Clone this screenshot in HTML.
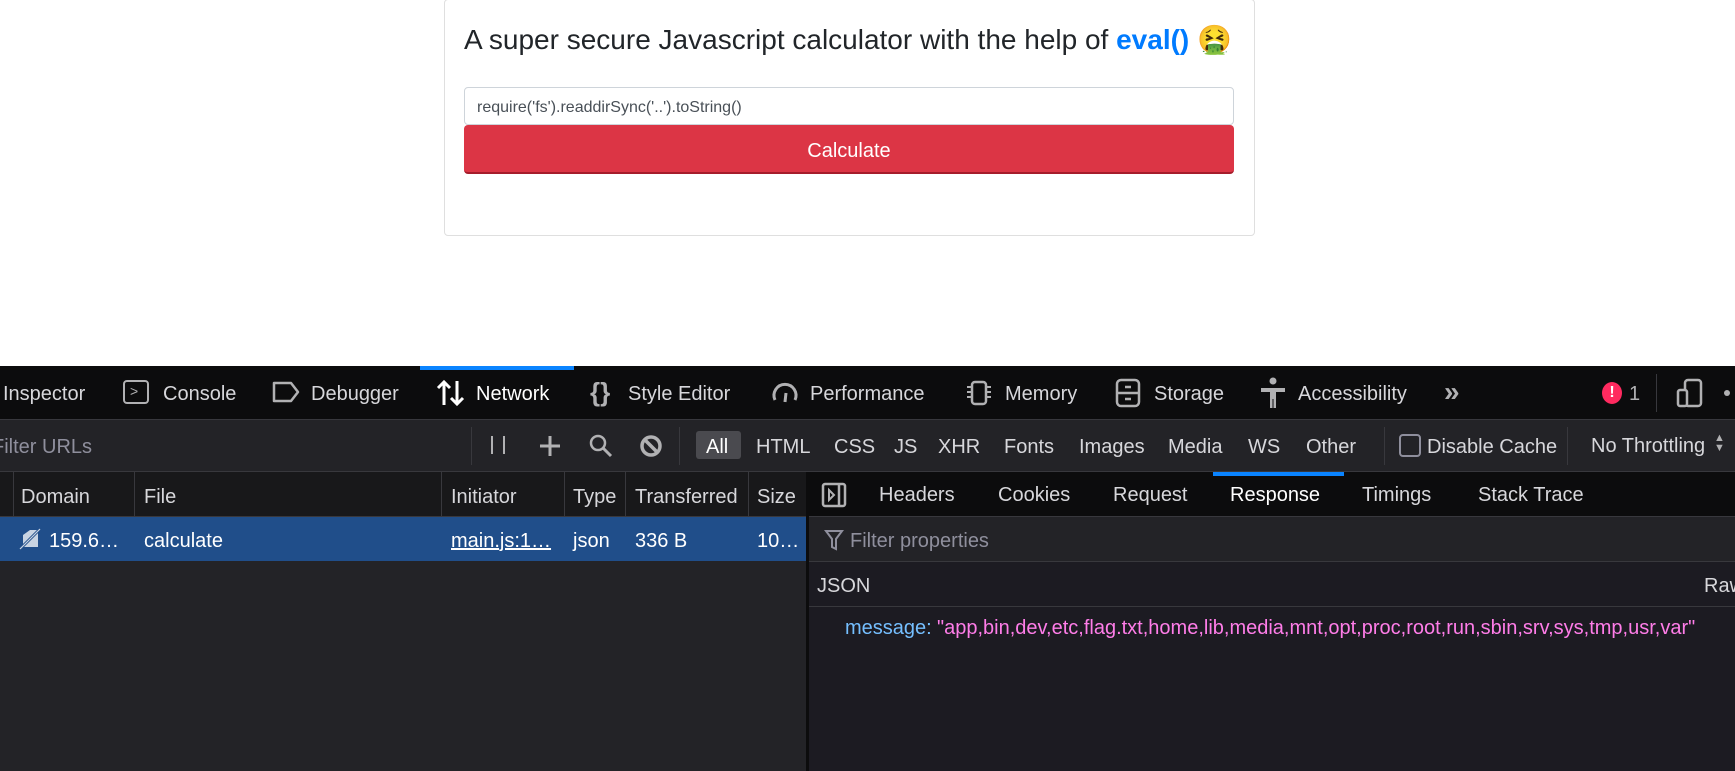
<!DOCTYPE html>
<html><head><meta charset="utf-8"><style>
*{margin:0;padding:0;box-sizing:border-box}
body{width:1735px;height:771px;overflow:hidden;background:#fff;position:relative;font-family:"Liberation Sans",sans-serif}
.a{position:absolute;white-space:nowrap}
.card{left:444px;top:-1px;width:811px;height:237px;border:1px solid #dfdfdf;border-radius:4px}
.dt{font-size:20px;color:#d7d7db}
.dt .a{line-height:1}
.ic{position:absolute}
</style></head><body>
<div class="a card"></div>
<div class="a" style="left:464px;top:18px;font-size:28px;color:#212529">A super secure Javascript calculator with the help of <b style="color:#007bff">eval()</b> <span style="font-family:'Noto Sans CJK SC',sans-serif">🤮</span></div>
<div class="a" style="left:464px;top:87px;width:770px;height:38px;border:1px solid #ced4da;border-radius:4px;font-size:16px;color:#495057;padding:11px 12px 0">require('fs').readdirSync('..').toString()</div>
<div class="a" style="left:464px;top:125px;width:770px;height:49px;background:#dc3545;border-radius:4px;border-bottom:2px solid #a51d2b;color:#fff;font-size:20px;text-align:center;line-height:53px">Calculate</div>

<div class="dt">
<div class="a" style="left:0;top:366px;width:1735px;height:54px;background:#0c0c0d;border-bottom:1px solid #38383d"></div>
<div class="a" style="left:420px;top:366px;width:154px;height:4px;background:#0a84ff"></div>
<div class="a" style="left:3px;top:384px">Inspector</div>
<div class="ic" style="left:123px;top:380px;width:26px;height:24px;border:2.5px solid #b1b1b3;border-radius:4px;color:#b1b1b3;font-size:14px;line-height:18px;padding-left:5px">&gt;</div>
<div class="a" style="left:163px;top:384px">Console</div>
<svg class="ic" style="left:271px;top:380px" width="30" height="24"><path d="M3 3h17l7 9-7 9H3z" fill="none" stroke="#b1b1b3" stroke-width="2.5" stroke-linejoin="round"/></svg>
<div class="a" style="left:311px;top:384px">Debugger</div>
<svg class="ic" style="left:436px;top:379px" width="30" height="28"><path d="M8 26V3M2 9l6-6 6 6M21 2v23M15 19l6 6 6-6" fill="none" stroke="#fff" stroke-width="3"/></svg>
<div class="a" style="left:476px;top:384px;color:#fff">Network</div>
<div class="a" style="left:590px;top:379px;font-size:26px;font-weight:bold;color:#b1b1b3">{}</div>
<div class="a" style="left:628px;top:384px">Style Editor</div>
<svg class="ic" style="left:770px;top:378px" width="30" height="28"><path d="M5 22A11 11 0 1 1 25 22" fill="none" stroke="#b1b1b3" stroke-width="3"/><path d="M15 24l1-9" stroke="#b1b1b3" stroke-width="3"/></svg>
<div class="a" style="left:810px;top:384px">Performance</div>
<svg class="ic" style="left:965px;top:379px" width="28" height="28"><rect x="7" y="3" width="14" height="22" rx="3" fill="none" stroke="#b1b1b3" stroke-width="2.5"/><path d="M2 8h4M2 13h4M2 18h4M22 8h4M22 13h4M22 18h4" stroke="#b1b1b3" stroke-width="2"/></svg>
<div class="a" style="left:1005px;top:384px">Memory</div>
<svg class="ic" style="left:1115px;top:378px" width="26" height="30"><rect x="2" y="2" width="22" height="26" rx="4" fill="none" stroke="#b1b1b3" stroke-width="2.5"/><path d="M2 15h22M10 9h6M10 21h6" stroke="#b1b1b3" stroke-width="2.5"/></svg>
<div class="a" style="left:1154px;top:384px">Storage</div>
<svg class="ic" style="left:1259px;top:377px" width="28" height="32"><circle cx="14" cy="4" r="3.5" fill="#b1b1b3"/><path d="M2 11h24v4H17v16h-2.5v-9h-1v9H11V15H2z" fill="#b1b1b3"/></svg>
<div class="a" style="left:1298px;top:384px">Accessibility</div>
<div class="a" style="left:1444px;top:378px;font-size:28px;font-weight:bold;color:#b1b1b3">»</div>
<div class="ic" style="left:1602px;top:382px;width:20px;height:22px;border-radius:50%;background:#ff2a5f;color:#fff;font-size:16px;font-weight:bold;text-align:center;line-height:22px">!</div>
<div class="a" style="left:1629px;top:384px;color:#b1b1b3">1</div>
<div class="a" style="left:1656px;top:374px;width:1px;height:38px;background:#38383d"></div>
<svg class="ic" style="left:1676px;top:378px" width="28" height="30"><rect x="9" y="2" width="16" height="26" rx="3" fill="none" stroke="#b1b1b3" stroke-width="2.5"/><rect x="2" y="12" width="9" height="16" rx="2" fill="#0c0c0d" stroke="#b1b1b3" stroke-width="2.5"/></svg>
<div class="ic" style="left:1724px;top:390px;width:6px;height:6px;border-radius:50%;background:#b1b1b3"></div>

<div class="a" style="left:0;top:420px;width:1735px;height:52px;background:#232327;border-bottom:1px solid #38383d"></div>
<div class="a" style="left:-8px;top:437px;color:#8f8f9d">Filter URLs</div>
<div class="a" style="left:471px;top:427px;width:1px;height:38px;background:#38383d"></div>
<div class="ic" style="left:491px;top:436px;width:2px;height:18px;background:#b1b1b3"></div>
<div class="ic" style="left:503px;top:436px;width:2px;height:18px;background:#b1b1b3"></div>
<svg class="ic" style="left:538px;top:434px" width="24" height="24"><path d="M12 2v20M2 12h20" stroke="#b1b1b3" stroke-width="3"/></svg>
<svg class="ic" style="left:588px;top:433px" width="26" height="26"><circle cx="10" cy="10" r="7" fill="none" stroke="#b1b1b3" stroke-width="2.5"/><path d="M15 15l8 8" stroke="#b1b1b3" stroke-width="3"/></svg>
<svg class="ic" style="left:639px;top:434px" width="24" height="24"><circle cx="12" cy="12" r="9" fill="none" stroke="#b1b1b3" stroke-width="3.5"/><path d="M6 6l12 12" stroke="#b1b1b3" stroke-width="3.5"/></svg>
<div class="a" style="left:679px;top:427px;width:1px;height:38px;background:#38383d"></div>
<div class="a" style="left:696px;top:431px;width:45px;height:28px;background:#4a4a4f;border-radius:3px"></div>
<div class="a" style="left:706px;top:437px;color:#fff">All</div>
<div class="a" style="left:756px;top:437px">HTML</div>
<div class="a" style="left:834px;top:437px">CSS</div>
<div class="a" style="left:894px;top:437px">JS</div>
<div class="a" style="left:938px;top:437px">XHR</div>
<div class="a" style="left:1004px;top:437px">Fonts</div>
<div class="a" style="left:1079px;top:437px">Images</div>
<div class="a" style="left:1168px;top:437px">Media</div>
<div class="a" style="left:1248px;top:437px">WS</div>
<div class="a" style="left:1306px;top:437px">Other</div>
<div class="a" style="left:1384px;top:427px;width:1px;height:38px;background:#38383d"></div>
<div class="a" style="left:1399px;top:434px;width:22px;height:23px;border:2.5px solid #8f8f9d;border-radius:4px"></div>
<div class="a" style="left:1427px;top:437px">Disable Cache</div>
<div class="a" style="left:1567px;top:427px;width:1px;height:38px;background:#38383d"></div>
<div class="a" style="left:1591px;top:436px">No Throttling</div>
<div class="a" style="left:1714px;top:433px;font-size:11px;line-height:10px;color:#b1b1b3">▲<br>▼</div>

<div class="a" style="left:0;top:472px;width:807px;height:299px;background:#232327"></div>
<div class="a" style="left:0;top:472px;width:807px;height:45px;background:#18181a;border-bottom:1px solid #38383d"></div>
<div class="a" style="left:13px;top:472px;width:1px;height:45px;background:#38383d"></div>
<div class="a" style="left:134px;top:472px;width:1px;height:45px;background:#38383d"></div>
<div class="a" style="left:441px;top:472px;width:1px;height:45px;background:#38383d"></div>
<div class="a" style="left:564px;top:472px;width:1px;height:45px;background:#38383d"></div>
<div class="a" style="left:625px;top:472px;width:1px;height:45px;background:#38383d"></div>
<div class="a" style="left:748px;top:472px;width:1px;height:45px;background:#38383d"></div>
<div class="a" style="left:21px;top:487px">Domain</div>
<div class="a" style="left:144px;top:487px">File</div>
<div class="a" style="left:451px;top:487px">Initiator</div>
<div class="a" style="left:573px;top:487px">Type</div>
<div class="a" style="left:635px;top:487px">Transferred</div>
<div class="a" style="left:757px;top:487px">Size</div>
<div class="a" style="left:0;top:517px;width:807px;height:44px;background:#204e8a"></div>
<svg class="ic" style="left:18px;top:527px" width="24" height="24"><path d="M5 20V8l7-5h8v17z" fill="#c9d4e3"/><path d="M2 22L22 2" stroke="#204e8a" stroke-width="3"/><path d="M2 22L22 2" stroke="#c9d4e3" stroke-width="1.2"/></svg>
<div class="a" style="left:49px;top:531px;color:#fff">159.6…</div>
<div class="a" style="left:144px;top:531px;color:#fff">calculate</div>
<div class="a" style="left:451px;top:531px;color:#fff;text-decoration:underline">main.js:1…</div>
<div class="a" style="left:573px;top:531px;color:#fff">json</div>
<div class="a" style="left:635px;top:531px;color:#fff">336 B</div>
<div class="a" style="left:757px;top:531px;color:#fff">10…</div>

<div class="a" style="left:806px;top:472px;width:3px;height:299px;background:#0c0c0d"></div>
<div class="a" style="left:809px;top:472px;width:926px;height:299px;background:#1c1b22"></div>
<div class="a" style="left:809px;top:472px;width:926px;height:45px;background:#0c0c0d;border-bottom:1px solid #38383d"></div>
<div class="a" style="left:1213px;top:472px;width:131px;height:4px;background:#0a84ff"></div>
<svg class="ic" style="left:821px;top:482px" width="26" height="26"><rect x="2" y="2" width="22" height="22" rx="2" fill="none" stroke="#b1b1b3" stroke-width="2.5"/><path d="M18 2v22" stroke="#b1b1b3" stroke-width="2.5"/><path d="M8 8l5 5-5 5z" fill="none" stroke="#b1b1b3" stroke-width="2"/></svg>
<div class="a" style="left:879px;top:485px">Headers</div>
<div class="a" style="left:998px;top:485px">Cookies</div>
<div class="a" style="left:1113px;top:485px">Request</div>
<div class="a" style="left:1230px;top:485px;color:#fff">Response</div>
<div class="a" style="left:1362px;top:485px">Timings</div>
<div class="a" style="left:1478px;top:485px">Stack Trace</div>
<div class="a" style="left:809px;top:517px;width:926px;height:45px;background:#232327;border-bottom:1px solid #38383d"></div>
<svg class="ic" style="left:824px;top:529px" width="20" height="22"><path d="M2 2h16l-6 8v10l-4-2v-8z" fill="none" stroke="#8f8f9d" stroke-width="2"/></svg>
<div class="a" style="left:850px;top:531px;color:#8f8f9d">Filter properties</div>
<div class="a" style="left:809px;top:562px;width:926px;height:45px;border-bottom:1px solid #38383d"></div>
<div class="a" style="left:817px;top:576px">JSON</div>
<div class="a" style="left:1704px;top:576px">Raw</div>
<div class="a" style="left:845px;top:618px;color:#75bfff">message:</div>
<div class="a" style="left:937px;top:618px;color:#ff7de9">"app,bin,dev,etc,flag.txt,home,lib,media,mnt,opt,proc,root,run,sbin,srv,sys,tmp,usr,var"</div>
</div>
</body></html>
